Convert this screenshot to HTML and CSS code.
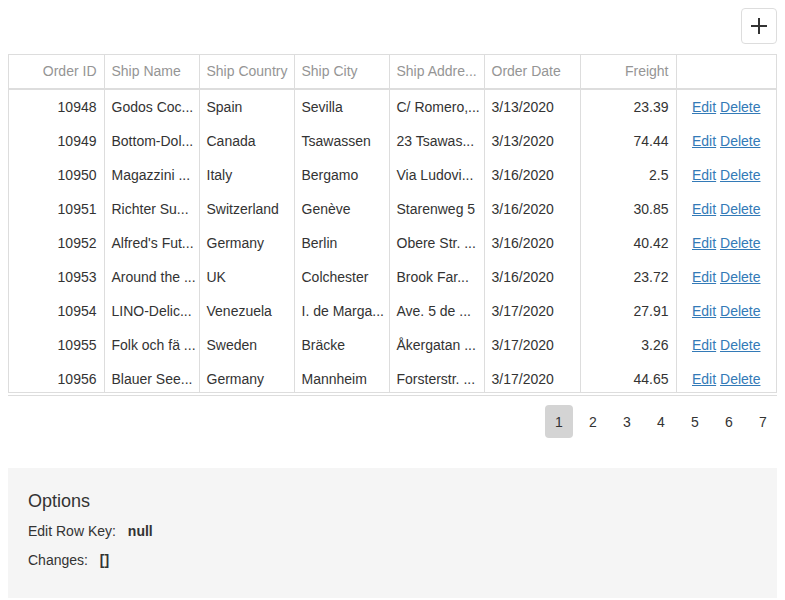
FILE: index.html
```html
<!DOCTYPE html>
<html>
<head>
<meta charset="utf-8">
<link rel="stylesheet" href="styles.css">
</head>
<body>
<div class="toolbar">
  <button class="add-btn" aria-label="Add">
    <svg width="18" height="18" viewBox="0 0 18 18"><path d="M9 1v16M1 9h16" stroke="#333" stroke-width="2" fill="none"/></svg>
  </button>
</div>
<div class="grid">
  <table class="head">
    <colgroup><col class="c1"><col class="c2"><col class="c3"><col class="c4"><col class="c5"><col class="c6"><col class="c7"><col class="c8"></colgroup>
    <tr>
      <th class="r">Order ID</th><th>Ship Name</th><th>Ship Country</th><th>Ship City</th><th>Ship Addre...</th><th>Order Date</th><th class="r">Freight</th><th></th>
    </tr>
  </table>
  <div class="rows">
    <table class="body">
      <colgroup><col class="c1"><col class="c2"><col class="c3"><col class="c4"><col class="c5"><col class="c6"><col class="c7"><col class="c8"></colgroup>
      <tr><td class="r">10948</td><td>Godos Coc...</td><td>Spain</td><td>Sevilla</td><td>C/ Romero,...</td><td>3/13/2020</td><td class="r">23.39</td><td class="act"><a href="#">Edit</a> <a href="#">Delete</a></td></tr>
      <tr><td class="r">10949</td><td>Bottom-Dol...</td><td>Canada</td><td>Tsawassen</td><td>23 Tsawas...</td><td>3/13/2020</td><td class="r">74.44</td><td class="act"><a href="#">Edit</a> <a href="#">Delete</a></td></tr>
      <tr><td class="r">10950</td><td>Magazzini ...</td><td>Italy</td><td>Bergamo</td><td>Via Ludovi...</td><td>3/16/2020</td><td class="r">2.5</td><td class="act"><a href="#">Edit</a> <a href="#">Delete</a></td></tr>
      <tr><td class="r">10951</td><td>Richter Su...</td><td>Switzerland</td><td>Genève</td><td>Starenweg 5</td><td>3/16/2020</td><td class="r">30.85</td><td class="act"><a href="#">Edit</a> <a href="#">Delete</a></td></tr>
      <tr><td class="r">10952</td><td>Alfred's Fut...</td><td>Germany</td><td>Berlin</td><td>Obere Str. ...</td><td>3/16/2020</td><td class="r">40.42</td><td class="act"><a href="#">Edit</a> <a href="#">Delete</a></td></tr>
      <tr><td class="r">10953</td><td>Around the ...</td><td>UK</td><td>Colchester</td><td>Brook Far...</td><td>3/16/2020</td><td class="r">23.72</td><td class="act"><a href="#">Edit</a> <a href="#">Delete</a></td></tr>
      <tr><td class="r">10954</td><td>LINO-Delic...</td><td>Venezuela</td><td>I. de Marga...</td><td>Ave. 5 de ...</td><td>3/17/2020</td><td class="r">27.91</td><td class="act"><a href="#">Edit</a> <a href="#">Delete</a></td></tr>
      <tr><td class="r">10955</td><td>Folk och fä ...</td><td>Sweden</td><td>Bräcke</td><td>Åkergatan ...</td><td>3/17/2020</td><td class="r">3.26</td><td class="act"><a href="#">Edit</a> <a href="#">Delete</a></td></tr>
      <tr><td class="r">10956</td><td>Blauer See...</td><td>Germany</td><td>Mannheim</td><td>Forsterstr. ...</td><td>3/17/2020</td><td class="r">44.65</td><td class="act"><a href="#">Edit</a> <a href="#">Delete</a></td></tr>
    </table>
  </div>
</div>
<div class="pager">
  <span class="page sel">1</span><span class="page">2</span><span class="page">3</span><span class="page">4</span><span class="page">5</span><span class="page">6</span><span class="page">7</span>
</div>
<div class="options">
  <div class="caption">Options</div>
  <div class="opt">Edit Row Key: <b class="val">null</b></div>
  <div class="opt">Changes: <b class="val">[]</b></div>
</div>
</body>
</html>
```
FILE: styles.css
```css
html, body {
  margin: 0;
  padding: 0;
}
body {
  margin: 8px;
  font-family: "Liberation Sans", Arial, sans-serif;
  font-size: 14px;
  color: #333;
  background: #fff;
}
.toolbar {
  display: flex;
  justify-content: flex-end;
  height: 36px;
  margin-bottom: 10px;
}
.add-btn {
  width: 36px;
  height: 36px;
  box-sizing: border-box;
  border: 1px solid #ddd;
  border-radius: 4px;
  background: #fff;
  display: flex;
  align-items: center;
  justify-content: center;
  padding: 0;
}
.grid {
  border: 1px solid #ddd;
  border-bottom: none;
}
table {
  width: 100%;
  table-layout: fixed;
  border-collapse: collapse;
  border-spacing: 0;
}
col.c1 { width: 95px; }
col.c2 { width: 95px; }
col.c3 { width: 95px; }
col.c4 { width: 95px; }
col.c5 { width: 95px; }
col.c6 { width: 96px; }
col.c7 { width: 96px; }
col.c8 { width: 100px; }
th, td {
  padding: 0 7px;
  text-align: left;
  white-space: nowrap;
  overflow: hidden;
  border-right: 1px solid #ddd;
  box-sizing: border-box;
}
th:last-child, td:last-child { border-right: none; }
th {
  height: 34px;
  padding-bottom: 2px;
  font-weight: normal;
  color: #959595;
  border-bottom: 2px solid #ddd;
}
td {
  height: 34px;
  color: #333;
}
.r { text-align: right; }
td.act { text-align: center; }
td.act a {
  color: #337ab7;
  text-decoration: underline;
}
.rows {
  height: 302px;
  overflow: hidden;
  border-bottom: 1px solid #ddd;
}
.pager {
  margin-top: 2px;
  border-top: 1px solid #ddd;
  padding-top: 9px;
  display: flex;
  justify-content: flex-end;
  gap: 6px;
}
.page {
  width: 28px;
  height: 33px;
  display: flex;
  align-items: center;
  justify-content: center;
  border-radius: 4px;
  color: #333;
}
.page.sel {
  background: #d4d4d4;
}
.options {
  margin-top: 30px;
  background: #f5f5f5;
  padding: 22px 20px 30px;
  height: 130px;
  box-sizing: border-box;
}
.caption {
  font-size: 18px;
  line-height: 22px;
  margin-bottom: 9px;
}
.opt {
  line-height: 20px;
  margin-bottom: 9px;
}
.val {
  margin-left: 8px;
  font-weight: bold;
}
```
